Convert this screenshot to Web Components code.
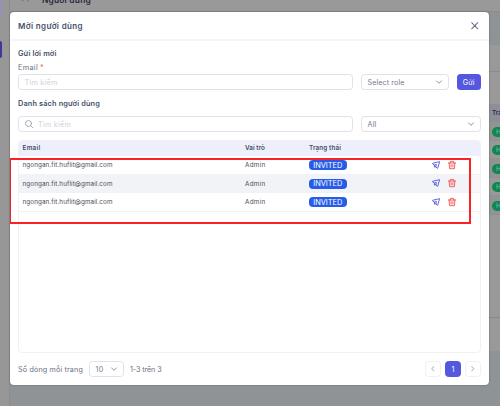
<!DOCTYPE html>
<html lang="vi">
<head>
<meta charset="utf-8">
<title>Mời người dùng</title>
<style>
    body {
        margin: 0;
        width: 500px;
        height: 406px;
        overflow: hidden;
        font-family: Inter, "Noto Sans", sans-serif;
        font-size: 7px;
        color: #3f4658;
    }
</style>
</head>
<body>
<app-page>
    <app-modal slot="modal">
        <ui-text slot="title" w="65" style="font-size:8px;font-weight:600;color:#45506a">Mời người dùng</ui-text>
        <invite-form></invite-form>
        <user-list></user-list>
        <app-pagination slot="footer"></app-pagination>
    </app-modal>
</app-page>
<script>
// One line of text, tracked out to a given width
class UiText extends HTMLElement {
    connectedCallback() {
        if (this.shadowRoot) return;
        this.attachShadow({mode: "open"});
        this.shadowRoot.innerHTML = `
<style>
    :host { display: block; white-space: nowrap; line-height: 1.2; flex: none; padding-top: 2px; }
    span { display: inline-block; }
</style>
<span><slot></slot></span>`;
        const width = Number(this.getAttribute("w"));
        const span = this.shadowRoot.querySelector("span");
        if (width) {
            const count = this.textContent.length;
            const natural = span.getBoundingClientRect().width;
            span.style.letterSpacing = (width - natural) / count + "px";
        }
    }
}

const icons = {
    close: `<path d="M1.5 1.5l13 13M14.5 1.5l-13 13"/>`,
    down: `<path d="M1.5 5l6.5 6.5L14.5 5"/>`,
    left: `<path d="M11 2L5 8l6 6"/>`,
    right: `<path d="M5 2l6 6-6 6"/>`,
    search: `<circle cx="7" cy="7" r="6"/><path d="M11.4 11.4L15.5 15.5"/>`,
    send: `<path d="M14.5 1.5L1.2 4.5c-.5.2-.6.8-.2 1.1l3.8 2.7v4l3-.9 2.400 3.200c.4.5 1 .4 1.200-.2z"/><path d="M4.800 8.300l4-1.600-1 4.700"/>`,
    trash: `<path d="M.8 4h14.400M4.800 4V.8h6.400V4M2.300 4l.8 11.400h9.800L13.700 4M6.200 7.400v4.600M9.800 7.400v4.600"/>`
};

class UiIcon extends HTMLElement {
    connectedCallback() {
        if (this.shadowRoot) return;
        this.attachShadow({mode: "open"});
        this.shadowRoot.innerHTML = `
<style>
    :host { display: block; width: 8px; height: 8px; flex: none; }
    svg { display: block; width: 100%; height: 100%; overflow: visible; fill: none; stroke: currentColor;
        stroke-width: var(--stroke, 2.2); stroke-linecap: round; stroke-linejoin: round; }
</style>
<svg viewBox="0 0 16 16">${icons[this.getAttribute("name")]}</svg>`;
    }
}

// Bordered box for inputs and selects
class UiField extends HTMLElement {
    connectedCallback() {
        if (this.shadowRoot) return;
        this.attachShadow({mode: "open"});
        this.shadowRoot.innerHTML = `
<style>
    :host { display: flex; align-items: center; box-sizing: border-box; height: 16px; padding: 0 6px 0 5.5px;
        border: 1px solid #e0e1e9; border-radius: 3.5px; background: #fff; color: #747b8a; }
    ui-icon { width: 6px; height: 6px; margin-left: auto; color: #7d8494; --stroke: 2.4; }
</style>
<slot></slot>${this.hasAttribute("select") ? `<ui-icon name="down"></ui-icon>` : ""}`;
    }
}

class InviteForm extends HTMLElement {
    constructor() {
        super();
        this.attachShadow({mode: "open"});
        this.shadowRoot.innerHTML = `
<style>
    :host { display: block; padding: 7px 8px 0; }
    .heading { box-sizing: border-box; height: 9px; font-size: 7.3px; font-weight: 600; color: #45506a; }
    .label { display: flex; gap: 2px; margin: 5px 0 3px; height: 9px; font-size: 7.3px; color: #697081; }
    .label b { color: #f26464; font-weight: 400; line-height: 12px; }
    .row { display: grid; grid-template-columns: 335px 88px 24px; column-gap: 8px; }
    .placeholder { font-size: 7.2px; color: #ced1d9; }
    .send { display: flex; align-items: center; justify-content: center; height: 16px; border-radius: 3.5px;
        background: #5557de; color: #fff; font-size: 7.2px; width: 24.5px; margin-left: -.5px; }
</style>
<ui-text class="heading" w="38.5">Gửi lời mời</ui-text>
<div class="label"><ui-text w="20">Email</ui-text><b>*</b></div>
<div class="row">
    <ui-field><ui-text class="placeholder" w="33">Tìm kiếm</ui-text></ui-field>
    <ui-field select><ui-text w="37" style="font-size:7.2px">Select role</ui-text></ui-field>
    <div class="send"><ui-text w="12">Gửi</ui-text></div>
</div>`;
    }
}

class UserRow extends HTMLElement {
    constructor() {
        super();
        this.attachShadow({mode: "open"});
        this.shadowRoot.innerHTML = `
<style>
    :host { display: grid; grid-template-columns: 222.5px 64px 122.5px 16px 20px; align-items: center;
        box-sizing: border-box; height: 18.5px; padding: 1px 0 0 3.5px; border-bottom: 1px solid #f1f2f5;
        font-size: 6.3px; color: #484d58; }
    :host([striped]) { background: linear-gradient(90deg, #f2f3f6 450px, #f8f8fa 450px); }
    .badge { display: flex; align-items: center; justify-content: center; width: 37.5px; height: 10px;
        border-radius: 4px; background: #275ce8; color: #fff; font-size: 7.4px; }
    ui-icon { margin-top: -1px; --stroke: 1.8; }
    .send { color: #5557de; }
    .trash { color: #f25353; }
</style>
<ui-text w="90">ngongan.fit.huflit@gmail.com</ui-text>
<ui-text w="20.5">Admin</ui-text>
<div class="badge"><ui-text w="29">INVITED</ui-text></div>
<ui-icon class="send" name="send"></ui-icon>
<ui-icon class="trash" name="trash"></ui-icon>`;
    }
}

class UserList extends HTMLElement {
    constructor() {
        super();
        this.attachShadow({mode: "open"});
        this.shadowRoot.innerHTML = `
<style>
    :host { display: block; padding: 8px 8px 0; }
    .heading { box-sizing: border-box; font-size: 7.3px; font-weight: 600; color: #45506a; height: 10px; }
    .filters { display: grid; grid-template-columns: 335px 120px; column-gap: 8px; margin-top: 8px; }
    .filters ui-icon { margin-right: 5.5px; color: #9399a6; --stroke: 1.6; }
    .placeholder { font-size: 7.2px; color: #ced1d9; }
    .table { box-sizing: border-box; height: 213px; margin-top: 8px; overflow: hidden;
        border: 1px solid #f0f1f4; border-radius: 4px; }
    .head { display: grid; grid-template-columns: 222.5px 64px 1fr; align-items: center; height: 16px;
        margin: -1px -1px 0; padding-left: 4.5px; background: #eeeffc; font-size: 6.3px; font-weight: 600; color: #454b62; }
</style>
<ui-text class="heading" w="82">Danh sách người dùng</ui-text>
<div class="filters">
    <ui-field><ui-icon name="search"></ui-icon><ui-text class="placeholder" w="33">Tìm kiếm</ui-text></ui-field>
    <ui-field select><ui-text w="9" style="font-size:7.2px">All</ui-text></ui-field>
</div>
<div class="table">
    <div class="head">
        <ui-text w="18">Email</ui-text>
        <ui-text w="20">Vai trò</ui-text>
        <ui-text w="32">Trạng thái</ui-text>
    </div>
    <user-row></user-row>
    <user-row striped></user-row>
    <user-row></user-row>
</div>`;
    }
}

class AppPagination extends HTMLElement {
    constructor() {
        super();
        this.attachShadow({mode: "open"});
        this.shadowRoot.innerHTML = `
<style>
    :host { display: flex; align-items: center; padding: 8px 8px 0; font-size: 7.2px; color: #697081; }
    ui-field { width: 35px; margin: 0 6px; }
    .pages { display: flex; gap: 4px; margin-left: auto; }
    .page { display: flex; align-items: center; justify-content: center; box-sizing: border-box;
        width: 16px; height: 16px; border: 1px solid #eff0f4; border-radius: 3.5px; color: #b8bcc8; }
    .page ui-icon { width: 5.5px; height: 5.5px; --stroke: 3; }
    .current { background: #5557de; border-color: #5557de; color: #fff; }
</style>
<ui-text w="65">Số dòng mỗi trang</ui-text>
<ui-field select><ui-text w="8">10</ui-text></ui-field>
<ui-text w="31.5">1-3 trên 3</ui-text>
<div class="pages">
    <div class="page"><ui-icon name="left"></ui-icon></div>
    <div class="page current"><ui-text>1</ui-text></div>
    <div class="page"><ui-icon name="right"></ui-icon></div>
</div>`;
    }
}

class AppModal extends HTMLElement {
    constructor() {
        super();
        this.attachShadow({mode: "open"});
        this.shadowRoot.innerHTML = `
<style>
    :host { display: block; position: relative; box-sizing: border-box; width: 479px; height: 373px;
        border-radius: 4px; background: #fff; box-shadow: 0 0 2px rgba(0, 0, 0, .35); }
    header { display: flex; align-items: center; justify-content: space-between; box-sizing: border-box;
        height: 29px; padding: 0 11px 0 8px; border-bottom: 2px solid #f5f5f7; }
    ui-icon { width: 7.5px; height: 7.5px; color: #66708a; }
    /* highlight frame over the table rows */
    .mark { position: absolute; left: 0; top: 146px; width: 461px; height: 66px; box-sizing: border-box;
        border: 2px solid #fa2226; border-left-width: 1px; }
</style>
<header><slot name="title"></slot><ui-icon name="close"></ui-icon></header>
<slot></slot>
<slot name="footer"></slot>
<div class="mark"></div>`;
    }
}

// Dimmed page that shows round the modal
class AppPage extends HTMLElement {
    constructor() {
        super();
        this.attachShadow({mode: "open"});
        this.shadowRoot.innerHTML = `
<style>
    :host { display: grid; position: relative; grid-template-columns: 10px 479px 11px; grid-template-rows: 12px 373px 21px;
        width: 500px; height: 406px; overflow: hidden; background: #8e9395; }
    .side { grid-row: 1 / 4; grid-column: 1; background: #979797; border-right: 1px solid #8d8d8d; box-sizing: border-box; }
    .side i { display: block; width: 2px; height: 17px; background: #9292b6; border-radius: 0 2px 2px 0; }
    .side i + i { margin-top: 24px; background: #3c399c; }
    .top { grid-row: 1; grid-column: 2 / 4; display: flex; gap: 12px; padding-left: 11px; box-sizing: border-box;
        border-bottom: 1px solid #8b8b8b; background: #999; color: #25293a; font-size: 8.4px; font-weight: 600; }
    .top ui-text { margin-top: -7.5px; }
    .top svg { display: block; width: 9px; height: 3px; margin-top: -1px; fill: none; stroke: #666; }
    .content { grid-row: 2; grid-column: 3; overflow: hidden; }
    .content div { box-sizing: border-box; }
    .banner { height: 33px; }
    .tabs { height: 27px; background: #999; border-bottom: 1px solid #8b8b8b; }
    .tools { height: 32px; background: #999; }
    .head { height: 18px; padding: 4px 0 0 3px; background: #8e8e99; font-size: 6.3px; font-weight: 600; color: #2c2d3c; }
    .row { height: 18.5px; padding: 4.5px 0 0 3px; background: #999; border-bottom: 1px solid #909091; }
    .row:nth-of-type(odd) { background: #929394; }
    .row span { display: block; width: 38px; height: 10px; padding-left: 4px; box-sizing: border-box;
        border-radius: 5px; background: #0e8850; color: #86bfa0; font-size: 6.5px; line-height: 11px; }
    .blank { height: 103px; background: #999; border-bottom: 1px solid #888; }
    .foot { height: 33px; background: #999; }
    ::slotted(app-modal) { grid-row: 2; grid-column: 2; }
</style>
<div class="side"><i></i><i></i></div>
<div class="top">
    <svg viewBox="0 0 9 3"><path d="M.5 0l2 2.3M8.5 0l-2 2.3"/></svg>
    <ui-text w="49">Người dùng</ui-text>
</div>
<div class="content">
    <div class="banner"></div>
    <div class="tabs"></div>
    <div class="tools"></div>
    <div class="head"><ui-text>Tra</ui-text></div>
    <div class="row"><span>H</span></div>
    <div class="row"><span>H</span></div>
    <div class="row"><span>H</span></div>
    <div class="row"><span>H</span></div>
    <div class="row"><span>H</span></div>
    <div class="blank"></div>
    <div class="foot"></div>
</div>
<slot name="modal"></slot>`;
    }
}

customElements.define("ui-text", UiText);
customElements.define("ui-icon", UiIcon);
customElements.define("ui-field", UiField);
customElements.define("user-row", UserRow);
customElements.define("invite-form", InviteForm);
customElements.define("user-list", UserList);
customElements.define("app-pagination", AppPagination);
customElements.define("app-modal", AppModal);
customElements.define("app-page", AppPage);
</script>
</body>
</html>
